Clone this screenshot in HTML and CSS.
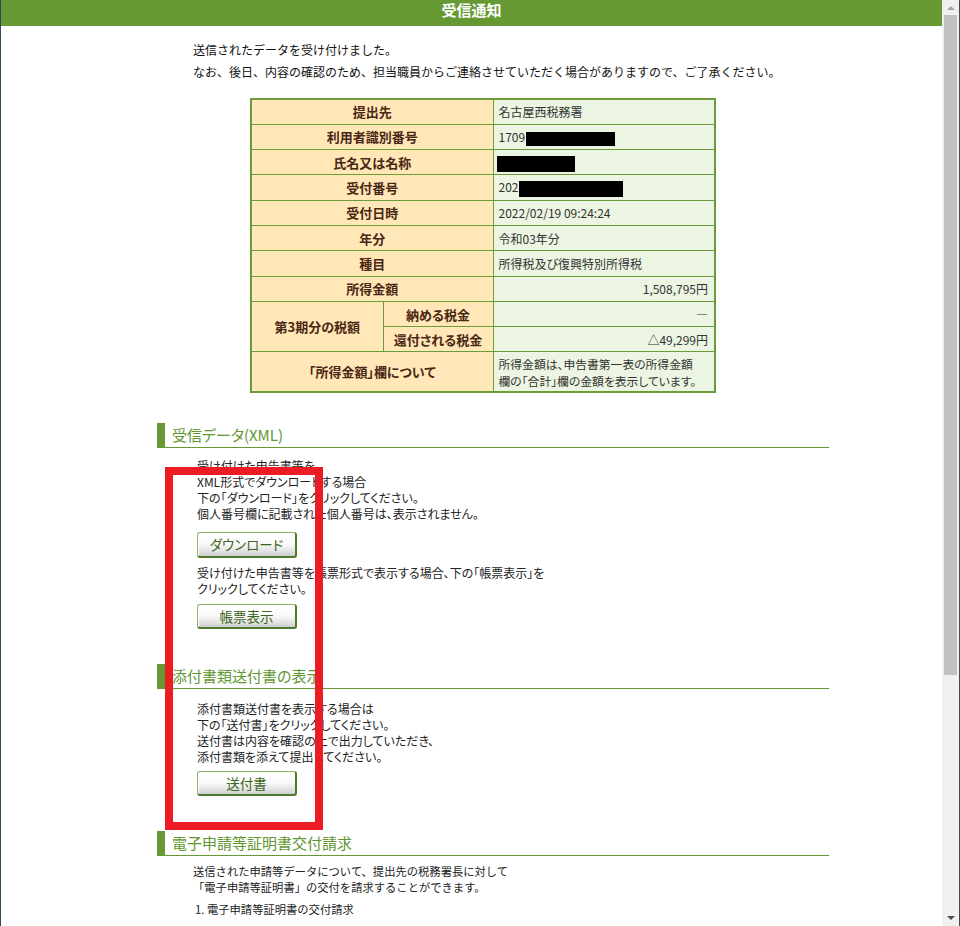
FILE: index.html
```html
<!DOCTYPE html>
<html lang="ja">
<head>
<meta charset="utf-8">
<title>受信通知</title>
<link rel="stylesheet" href="styles.css">
</head>
<body>
<div class="edge-left"></div>
<div class="page">
  <div class="topbar">受信通知</div>
  <p class="intro">送信されたデータを受け付けました。<br>なお、後日、内容の確認のため、担当職員からご連絡させていただく場合がありますので、ご了承ください。</p>

  <table class="result">
    <colgroup><col class="c1"><col class="c2"><col class="c3"></colgroup>
    <tr><th colspan="2">提出先</th><td>名古屋西税務署</td></tr>
    <tr><th colspan="2">利用者識別番号</th><td>1709<span class="mask m1"></span></td></tr>
    <tr><th colspan="2">氏名又は名称</th><td><span class="mask m2"></span></td></tr>
    <tr><th colspan="2">受付番号</th><td>202<span class="mask m3"></span></td></tr>
    <tr><th colspan="2">受付日時</th><td>2022/02/19 09:24:24</td></tr>
    <tr><th colspan="2">年分</th><td>令和03年分</td></tr>
    <tr><th colspan="2">種目</th><td>所得税及び復興特別所得税</td></tr>
    <tr><th colspan="2">所得金額</th><td class="num">1,508,795円</td></tr>
    <tr><th rowspan="2">第3期分の税額</th><th>納める税金</th><td class="num">―</td></tr>
    <tr><th>還付される税金</th><td class="num">△49,299円</td></tr>
    <tr class="tall"><th colspan="2">「所得金額」欄について</th><td class="note"><span class="note-line">所得金額は、申告書第一表の所得金額</span><span class="note-line">欄の「合計」欄の金額を表示しています。</span></td></tr>
  </table>

  <section class="sec sec-first">
    <h2 class="sec-title"><span>受信データ(XML)</span></h2>
    <div class="sec-body">
      <p class="txt t-first">受け付けた申告書等を<br>XML形式でダウンロードする場合<br>下の「ダウンロード」をクリックしてください。<br>個人番号欄に記載された個人番号は、表示されません。</p>
      <button class="btn b-first" type="button">ダウンロード</button>
      <p class="txt t-second">受け付けた申告書等を帳票形式で表示する場合、下の「帳票表示」を<br>クリックしてください。</p>
      <button class="btn b-second" type="button">帳票表示</button>
    </div>
  </section>

  <section class="sec sec-mid">
    <h2 class="sec-title"><span>添付書類送付書の表示</span></h2>
    <div class="sec-body">
      <p class="txt t-third">添付書類送付書を表示する場合は<br>下の「送付書」をクリックしてください。<br>送付書は内容を確認の上で出力していただき、<br>添付書類を添えて提出してください。</p>
      <button class="btn b-third" type="button">送付書</button>
    </div>
  </section>

  <section class="sec sec-last">
    <h2 class="sec-title"><span>電子申請等証明書交付請求</span></h2>
    <div class="sec-body narrow">
      <p class="txt mono t-fourth">送信された申請等データについて、提出先の税務署長に対して<br>「電子申請等証明書」の交付を請求することができます。</p>
      <p class="txt mono t-list">1. 電子申請等証明書の交付請求</p>
    </div>
  </section>

  <div class="highlight"></div>
</div>
<div class="scrollbar">
  <div class="sb-btn sb-up"><span class="arrow-up"></span></div>
  <div class="sb-track"><div class="sb-thumb"></div></div>
  <div class="sb-btn sb-down"><span class="arrow-down"></span></div>
</div>
<div class="edge-right"></div>
</body>
</html>
```

FILE: styles.css
```css
html, body {
  margin: 0;
  padding: 0;
}
body {
  width: 960px;
  height: 926px;
  overflow: hidden;
  display: flex;
  font-family: "Noto Sans CJK JP", "Noto Sans", sans-serif;
  color: #222;
  background: #fff;
}
.edge-left {
  width: 1px;
  background: #2b4a5a;
  flex: none;
}
.edge-right {
  width: 1px;
  background: #4a4a4a;
  flex: none;
}
.page {
  position: relative;
  width: 941px;
  flex: none;
  height: 926px;
  overflow: hidden;
  background: #fff;
}
.topbar {
  height: 26px;
  background: #669933;
  color: #fff;
  font-size: 15px;
  font-weight: bold;
  line-height: 20px;
  text-align: center;
}
.intro {
  margin: 13px 0 0 192px;
  font-size: 12px;
  line-height: 22px;
  color: #111;
}

/* result table */
.result {
  margin: 15px 0 0 249px;
  width: 464px;
  table-layout: fixed;
  border-collapse: collapse;
  border: 2px solid #6a9c37;
}
.result .c1 { width: 132px; }
.result .c2 { width: 110px; }
.result .c3 { width: 222px; }
.result tr { height: 25.3px; }
.result tr.tall { height: 40px; }
.result th, .result td {
  border: 1px solid #6a9c37;
  padding: 0 5px;
  white-space: nowrap;
}
.result th {
  background: #ffe7b7;
  color: #4a2614;
  font-size: 13px;
  font-weight: bold;
  text-align: center;
  font-feature-settings: "palt" 1;
}
.result td {
  background: #ebf5e1;
  color: #333;
  font-size: 12px;
  text-align: left;
  font-feature-settings: "palt" 1;
}
.result td.num {
  text-align: right;
  padding-right: 6px;
}
.result td.note {
  padding: 2px 5px;
}
.note-line {
  display: block;
  font-size: 11.8px;
  line-height: 17px;
}
.mask {
  display: inline-block;
  background: #000;
  vertical-align: middle;
}
.mask.m1 { width: 89px; height: 14px; margin-left: 1px; }
.mask.m2 { width: 78px; height: 16px; margin-left: -2px; }
.mask.m3 { width: 104px; height: 16px; margin-left: 0; }

/* sections */
.sec {
  margin-left: 156px;
  width: 672px;
}
.sec-first { margin-top: 30px; }
.sec-mid { margin-top: 35px; }
.sec-last { margin-top: 35px; }
.sec-title {
  margin: 0;
  height: 24px;
  border-bottom: 1px solid #669933;
  display: flex;
  font-weight: normal;
}
.sec-title span {
  border-left: 8px solid #669933;
  padding-left: 7px;
  font-size: 15px;
  line-height: 24px;
  color: #5f9630;
  font-feature-settings: "palt" 1;
}
.sec-body {
  padding-left: 40px;
}
.sec-body.narrow {
  padding-left: 36px;
}
.txt {
  margin: 0;
  font-size: 12px;
  line-height: 16px;
  color: #222;
  font-feature-settings: "palt" 1;
}
.txt.mono {
  font-size: 11.3px;
  font-feature-settings: normal;
}
.t-first { padding-top: 10px; }
.t-second { margin-top: 7px; }
.t-third { padding-top: 12px; }
.t-fourth { padding-top: 7px; }
.t-list { margin-top: 6px; padding-left: 2px; }

.btn {
  display: block;
  box-sizing: border-box;
  width: 100px;
  height: 26px;
  margin: 0;
  padding: 0;
  border-style: solid;
  border-width: 1px 2px 2px 1px;
  border-color: #8db66a #4f7a2c #4f7a2c #8db66a;
  border-radius: 3px;
  background: linear-gradient(#ffffff 0%, #fbfbfb 45%, #e6e6e6 75%, #cfcfcf 100%);
  box-shadow: inset 1px 1px 0 #ffffff;
  color: #3a6620;
  font-family: "Noto Sans CJK JP", "Noto Sans", sans-serif;
  font-size: 13.5px;
  line-height: 22px;
  text-align: center;
  font-feature-settings: "palt" 1;
}
.b-first { margin-top: 10px; }
.b-second { margin-top: 7px; height: 25px; }
.b-third { margin-top: 6px; height: 25px; }

/* red annotation box */
.highlight {
  position: absolute;
  left: 164px;
  top: 467px;
  width: 158px;
  height: 363px;
  box-sizing: border-box;
  border: 8px solid #ed1c24;
}

/* scrollbar */
.scrollbar {
  width: 17px;
  flex: none;
  height: 926px;
  background: #f0f0f0;
  display: flex;
  flex-direction: column;
}
.sb-btn {
  flex: none;
  display: flex;
  align-items: center;
  justify-content: center;
}
.sb-up { height: 15px; }
.sb-down { height: 17px; }
.sb-track {
  flex: 1;
  padding: 0 2px;
}
.sb-thumb {
  height: 660px;
  background: #c1c1c1;
}
.arrow-up {
  width: 0;
  height: 0;
  border-left: 4px solid transparent;
  border-right: 4px solid transparent;
  border-bottom: 4px solid #a3a3a3;
}
.arrow-down {
  width: 0;
  height: 0;
  border-left: 4px solid transparent;
  border-right: 4px solid transparent;
  border-top: 4px solid #505050;
}
```
